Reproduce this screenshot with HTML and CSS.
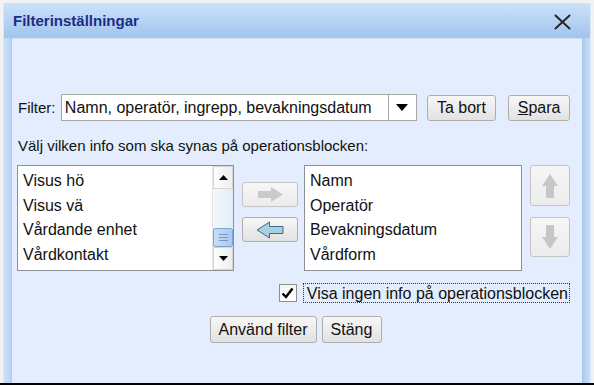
FILE: index.html
```html
<!DOCTYPE html>
<html lang="sv">
<head>
	<meta charset="UTF-8">
	<title>Filterinställningar</title>
	<link rel="stylesheet" href="styles.css">
</head>
<body>
	<div class="screen">
		<section class="dialog">
			<header class="title-bar">
				<h1>Filterinställningar</h1>
				<a href="javascript:;" class="close">
					<svg width="17" height="16" viewBox="0 0 17 16"><path d="M1.5 1.5 L15.5 14.5 M15.5 1.5 L1.5 14.5" stroke="#262626" stroke-width="2" stroke-linecap="round"/></svg>
				</a>
			</header>
			<div class="content">
				<div class="filter-row">
					<span class="label">Filter:</span>
					<div class="combo">
						<span class="combo-text">Namn, operatör, ingrepp, bevakningsdatum</span>
						<span class="combo-btn">
							<svg width="12" height="7" viewBox="0 0 12 7"><path d="M0 0 H12 L6 7 Z" fill="#000"/></svg>
						</span>
					</div>
					<button class="btn btn-remove">Ta bort</button>
					<button class="btn btn-save"><u>S</u>para</button>
				</div>

				<p class="hint">Välj vilken info som ska synas på operationsblocken:</p>

				<div class="lists">
					<div class="listbox listbox-left">
						<ul class="items">
							<li>Visus hö</li>
							<li>Visus vä</li>
							<li>Vårdande enhet</li>
							<li>Vårdkontakt</li>
						</ul>
						<div class="scrollbar">
							<span class="sb-btn">
								<svg width="9" height="5" viewBox="0 0 9 5"><path d="M0 5 H9 L4.5 0 Z" fill="#000"/></svg>
							</span>
							<span class="sb-track"></span>
							<span class="sb-thumb">
								<svg width="9" height="7" viewBox="0 0 9 7"><path d="M0 0.5 H9 M0 3.5 H9 M0 6.5 H9" stroke="#7c96b8" stroke-width="1"/></svg>
							</span>
							<span class="sb-btn">
								<svg width="9" height="5" viewBox="0 0 9 5"><path d="M0 0 H9 L4.5 5 Z" fill="#000"/></svg>
							</span>
						</div>
					</div>

					<div class="move-col">
						<button class="btn btn-move" disabled>
							<svg width="27" height="17" viewBox="0 0 27 17"><path d="M1 5 H14 V1 L26 8.5 L14 16 V12 H1 Z" fill="#cacaca"/></svg>
						</button>
						<button class="btn btn-move">
							<svg width="28" height="18" viewBox="0 0 28 18"><path d="M27 5.5 H13.5 V1 L1 9 L13.5 17 V12.5 H27 Z" fill="#a8cfe3" stroke="#3c6c86" stroke-width="1" stroke-linejoin="round"/></svg>
						</button>
					</div>

					<div class="listbox listbox-right">
						<ul class="items">
							<li>Namn</li>
							<li>Operatör</li>
							<li>Bevakningsdatum</li>
							<li>Vårdform</li>
						</ul>
					</div>

					<div class="order-col">
						<button class="btn btn-order" disabled>
							<svg width="18" height="26" viewBox="0 0 18 26"><path d="M9 1 L17 13 H13 V25 H5 V13 H1 Z" fill="#c6c6c6"/></svg>
						</button>
						<button class="btn btn-order btn-down" disabled>
							<svg width="18" height="26" viewBox="0 0 18 26"><path d="M9 25 L17 13 H13 V1 H5 V13 H1 Z" fill="#c6c6c6"/></svg>
						</button>
					</div>
				</div>

				<div class="check-row">
					<span class="checkbox">
						<svg width="13" height="12" viewBox="0 0 13 12"><path d="M1.5 6.5 L5 10 L11.5 1.5" fill="none" stroke="#000" stroke-width="2.4"/></svg>
					</span>
					<span class="check-label">Visa ingen info på operationsblocken</span>
				</div>

				<div class="actions">
					<button class="btn btn-apply">Använd filter</button>
					<button class="btn btn-close">Stän<u>g</u></button>
				</div>
			</div>
		</section>
	</div>
</body>
</html>
```

FILE: styles.css
```css
html,body{
	margin: 0;
	padding: 0;
}
body{
	font-family: "Liberation Sans", Arial, sans-serif;
	color: #111;
}
.screen{
	width: 594px;
	height: 385px;
	box-sizing: border-box;
	padding: 3px 3px 0;
	background: #f2f2f2;
	border-bottom: 2px solid #000;
	overflow: hidden;
}
.dialog{
	height: 100%;
	display: flex;
	flex-direction: column;
	background: linear-gradient(to right, #c9e0f8 0, #bcd6f4 6px, #a9c8ec 8px, #bcd6f4 8px, #bcd6f4 calc(100% - 8px), #a9c8ec calc(100% - 8px), #c9e0f8 100%);
	border-left: 1px solid #d9e8fb;
	border-right: 1px solid #d9e8fb;
}

/* title */
.title-bar{
	height: 35px;
	flex: none;
	display: flex;
	align-items: center;
	justify-content: space-between;
	padding: 0 19px 0 9px;
	background: linear-gradient(#cae2fa, #b3d0f2 60%, #a3c3ec);
}
.title-bar h1{
	margin: 0;
	font-size: 15px;
	font-weight: bold;
	color: #1c2c85;
}
.close{
	display: flex;
	margin-top: 2px;
}

.content{
	flex: 1;
	margin: 0 8px;
	padding: 55px 12px 0 5px;
	background: #e3edfd;
	border-top: 1px solid #d2e3f9;
	font-size: 16px;
}

/* buttons */
.btn{
	font-family: inherit;
	font-size: 16px;
	color: #111;
	border: 1px solid #aeaeae;
	border-radius: 3px;
	background: linear-gradient(#f7f7f7, #ececec 50%, #e2e2e2);
	padding: 0;
	display: flex;
	align-items: center;
	justify-content: center;
}
.btn[disabled]{
	border-color: #c4c4c4;
	background: linear-gradient(#f6f6f6, #ececec);
}

/* filter row */
.filter-row{
	display: flex;
	align-items: center;
	height: 27px;
}
.label{
	font-size: 15px;
	margin-left: 1px;
	width: 43px;
}
.combo{
	width: 355px;
	height: 25px;
	display: flex;
	border: 1px solid #a6a6a6;
	background: #fff;
}
.combo-text{
	flex: 1;
	padding-left: 3px;
	line-height: 25px;
	font-size: 16px;
	white-space: nowrap;
}
.combo-btn{
	width: 27px;
	border-left: 1px solid #a6a6a6;
	display: flex;
	align-items: center;
	justify-content: center;
}
.btn-remove{
	margin-left: 10px;
	width: 70px;
	height: 26px;
}
.btn-save{
	margin-left: 12px;
	width: 62px;
	height: 26px;
}

.hint{
	margin: 16px 0 0 1px;
	font-size: 15px;
	line-height: 18px;
}

/* lists */
.lists{
	display: flex;
	margin-top: 10px;
	align-items: flex-start;
}
.listbox{
	height: 104px;
	border: 1px solid #8c9097;
	background: #fff;
	display: flex;
}
.listbox-left{
	width: 215px;
}
.listbox-right{
	width: 216px;
	margin-left: 6px;
}
.items{
	flex: 1;
	list-style: none;
	margin: 0;
	padding: 2px 0 0 5px;
}
.items li{
	height: 24.7px;
	line-height: 25px;
	white-space: nowrap;
}
.scrollbar{
	width: 20px;
	display: flex;
	flex-direction: column;
	border-left: 1px solid #e6e6e6;
}
.sb-btn{
	height: 21px;
	display: flex;
	align-items: center;
	justify-content: center;
	background: linear-gradient(to right, #fdfdfd, #eeeeee);
	border: 1px solid #d5d5d5;
}
.sb-track{
	flex: 1;
	background: linear-gradient(to right, #f4f8fd, #e2ecf8);
}
.sb-thumb{
	height: 17px;
	display: flex;
	align-items: center;
	justify-content: center;
	background: linear-gradient(to right, #c9def7, #a9c9ef);
	border: 1px solid #7da3d3;
	border-radius: 2px;
}

.move-col{
	margin-left: 8px;
	padding-top: 17px;
	display: flex;
	flex-direction: column;
	gap: 10px;
}
.btn-move{
	width: 56px;
	height: 25px;
}

.order-col{
	margin-left: 8px;
	display: flex;
	flex-direction: column;
	gap: 11px;
}
.btn-order{
	width: 40px;
	height: 41px;
}
.btn-down{
	height: 40px;
}

/* checkbox */
.check-row{
	display: flex;
	justify-content: flex-end;
	align-items: center;
	margin-top: 12px;
}
.checkbox{
	width: 16px;
	height: 16px;
	border: 1px solid #8e8f8f;
	background: linear-gradient(#f4f4f4, #ffffff);
	display: flex;
	align-items: center;
	justify-content: center;
}
.check-label{
	margin-left: 6px;
	padding: 0 1px 0 3px;
	height: 18px;
	line-height: 19px;
	border: 1px dotted #333;
	white-space: nowrap;
}

.actions{
	display: flex;
	justify-content: center;
	gap: 5px;
	margin-top: 13px;
	padding-left: 4px;
}
.btn-apply{
	width: 107px;
	height: 27px;
}
.btn-close{
	width: 60px;
	height: 27px;
}
```
